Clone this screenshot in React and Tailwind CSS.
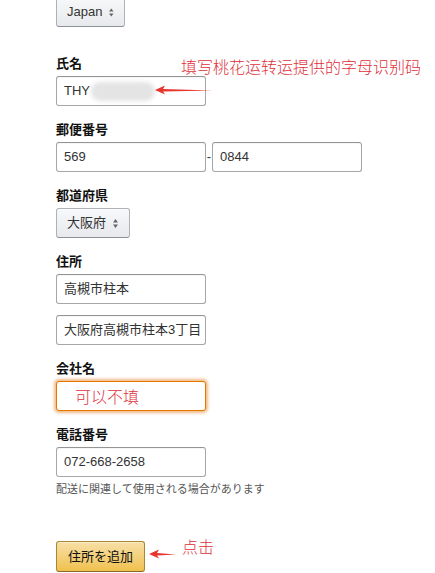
const font = { fontFamily: '"Liberation Sans", Arial, "Noto Sans CJK JP", sans-serif' };

const inputCls =
  "h-[30px] w-[150px] rounded-[3px] border border-[#a6a6a6] border-t-[#949494] bg-white px-[7px] text-[13px] leading-[28px] text-[#333] shadow-[inset_0_1px_0_rgba(255,255,255,.5),0_1px_0_rgba(0,0,0,.07)_inset]";

const selectCls =
  "flex h-[30px] items-center gap-[7px] rounded-[3px] border border-[#adb1b8] border-b-[#8d9096] bg-gradient-to-b from-[#f7f8fa] to-[#e7e9ec] px-[10px] text-[13px] text-[#333] shadow-[0_1px_0_rgba(255,255,255,.6)_inset]";

const Label = ({ children }) => (
  <div className="mb-[3px] text-[13px] font-bold leading-[19px] text-[#111]">{children}</div>
);

const Arrows = () => (
  <svg width="5" height="9" viewBox="0 0 5 9">
    <path d="M2.5 0 L5 3.5 L0 3.5 Z M0 5.5 L5 5.5 L2.5 9 Z" fill="#666" />
  </svg>
);

const RedArrow = ({ width }) => (
  <svg width={width} height="10" viewBox={`0 0 ${width} 10`}>
    <path d={`M0 5 L10 0.5 L8 4 L${width} 5.6 L8 6.6 L10 9.5 Z`} fill="#e8342c" />
  </svg>
);

export default function App() {
  return (
    <div className="relative h-[573px] w-[435px] overflow-hidden bg-white" style={font}>
      <div className="pl-[56px]">
        <div className="mt-[-3px] w-[69px]">
          <div className={selectCls}>
            <span>Japan</span>
            <Arrows />
          </div>
        </div>

        <div className="mt-[27px]">
          <Label>氏名</Label>
          <div className={inputCls + " relative"}>
            THY
            <div className="absolute left-[34px] top-[5px] h-[19px] w-[64px] rounded-full bg-[#e4e4e4] blur-[2px]" />
          </div>
        </div>

        <div className="mt-[14px]">
          <Label>郵便番号</Label>
          <div className="flex items-center">
            <div className={inputCls}>569</div>
            <span className="w-[6px] text-center text-[13px] text-[#333]">-</span>
            <div className={inputCls}>0844</div>
          </div>
        </div>

        <div className="mt-[14px]">
          <Label>都道府県</Label>
          <div className="w-[74px]">
            <div className={selectCls}>
              <span>大阪府</span>
              <Arrows />
            </div>
          </div>
        </div>

        <div className="mt-[14px]">
          <Label>住所</Label>
          <div className={inputCls}>高槻市柱本</div>
          <div className={inputCls + " mt-[11px] overflow-hidden whitespace-nowrap"}>大阪府高槻市柱本3丁目</div>
        </div>

        <div className="mt-[14px]">
          <Label>会社名</Label>
          <div className="h-[30px] w-[150px] rounded-[3px] border border-[#e77600] bg-white pl-[18px] shadow-[0_0_3px_2px_rgba(228,121,17,0.5)]">
            <span className="text-[16px] leading-[28px] font-light text-[#e0303a]" style={{ fontFamily: '"Noto Sans CJK SC", sans-serif' }}>
              可以不填
            </span>
          </div>
        </div>

        <div className="mt-[14px]">
          <Label>電話番号</Label>
          <div className={inputCls}>072-668-2658</div>
          <div className="mt-[4px] text-[11px] leading-[16px] text-[#555]">配送に関連して使用される場合があります</div>
        </div>

        <div className="mt-[44px] flex items-center">
          <div className="flex h-[31px] w-[89px] items-center justify-center rounded-[3px] border border-[#a88734] border-b-[#846a29] bg-gradient-to-b from-[#f7dfa5] to-[#f0c14b] text-[13px] text-[#111] shadow-[0_1px_0_rgba(255,255,255,.4)_inset]">
            住所を追加
          </div>
        </div>
      </div>

      <div
        className="absolute left-[181px] top-[55px] text-[16px] font-light leading-[22px] text-[#e0303a]"
        style={{ fontFamily: '"Noto Sans CJK SC", sans-serif' }}
      >
        填写桃花运转运提供的字母识别码
      </div>
      <div className="absolute left-[155px] top-[85px]">
        <RedArrow width={58} />
      </div>

      <div
        className="absolute left-[182px] top-[535px] text-[16px] font-light leading-[22px] text-[#e0303a]"
        style={{ fontFamily: '"Noto Sans CJK SC", sans-serif' }}
      >
        点击
      </div>
      <div className="absolute left-[149px] top-[549px]">
        <RedArrow width={27} />
      </div>
    </div>
  );
}
